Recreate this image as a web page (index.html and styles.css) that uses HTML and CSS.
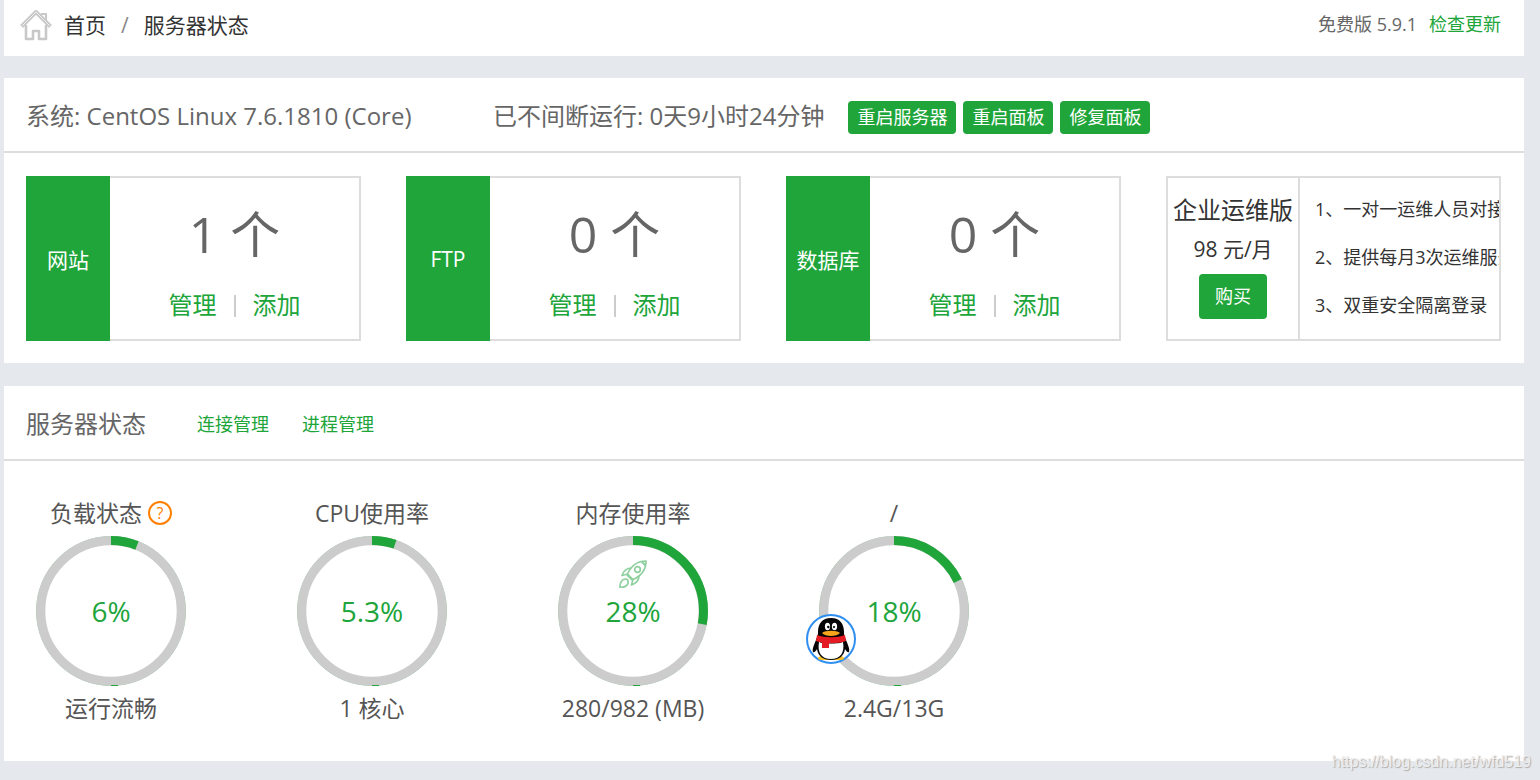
FILE: index.html
```html
<!DOCTYPE html>
<html lang="zh-CN">
<head>
<meta charset="utf-8">
<title>服务器状态</title>
<link rel="stylesheet" href="styles.css">
</head>
<body>
<header class="panel topbar">
  <nav class="crumbs">
    <svg class="home" viewBox="0 0 32 32" fill="none" stroke="#c8c8c8" stroke-width="2.6" stroke-linejoin="round" aria-hidden="true">
      <path d="M6 16V30h7v-8h6v8h7V16"/>
      <path d="M1.500 17.500L16 3l14.500 14.500" stroke-width="4"/>
      <path d="M1.500 17.500L16 3l14.500 14.500" stroke="#eee" stroke-width="1"/>
      <path d="M21 5h5v7" stroke-width="2"/>
    </svg>
    <a class="crumb" href="#">首页</a>
    <span class="slash">/</span>
    <span class="crumb">服务器状态</span>
  </nav>
  <div class="version"><span>免费版 5.9.1</span><a class="link" href="#">检查更新</a></div>
</header>

<section class="panel">
  <div class="panel-head">
    <span class="system">系统: CentOS Linux 7.6.1810 (Core)</span>
    <span class="uptime">已不间断运行: 0天9小时24分钟</span>
    <div class="actions">
      <button class="btn" type="button">重启服务器</button>
      <button class="btn" type="button">重启面板</button>
      <button class="btn" type="button">修复面板</button>
    </div>
  </div>
  <div class="cards">
    <article class="card">
      <h2 class="card-name">网站</h2>
      <div class="card-body">
        <div class="count">1 个</div>
        <div class="card-links"><a class="link" href="#">管理</a><span class="divider"></span><a class="link" href="#">添加</a></div>
      </div>
    </article>
    <article class="card">
      <h2 class="card-name">FTP</h2>
      <div class="card-body">
        <div class="count">0 个</div>
        <div class="card-links"><a class="link" href="#">管理</a><span class="divider"></span><a class="link" href="#">添加</a></div>
      </div>
    </article>
    <article class="card">
      <h2 class="card-name">数据库</h2>
      <div class="card-body">
        <div class="count">0 个</div>
        <div class="card-links"><a class="link" href="#">管理</a><span class="divider"></span><a class="link" href="#">添加</a></div>
      </div>
    </article>
    <article class="card offer">
      <div class="plan">
        <h2 class="plan-name">企业运维版</h2>
        <div class="price">98 元/月</div>
        <button class="btn buy" type="button">购买</button>
      </div>
      <ul class="features">
        <li>1、一对一运维人员对接</li>
        <li>2、提供每月3次运维服务</li>
        <li>3、双重安全隔离登录</li>
      </ul>
    </article>
  </div>
</section>

<section class="panel status">
  <div class="panel-head">
    <h2 class="status-title">服务器状态</h2>
    <nav class="status-links"><a class="link" href="#">连接管理</a><a class="link" href="#">进程管理</a></nav>
  </div>
  <div class="gauges">
    <div class="gauge">
      <div class="label">负载状态<button class="help" type="button" aria-label="帮助">?</button></div>
      <div class="dial">
        <svg class="ring" viewBox="0 0 150 150"><circle class="edge" cx="75" cy="75" r="74.500"/><circle class="track" cx="75" cy="75" r="70.200"/><circle class="arc" cx="75" cy="75" r="70.500" pathLength="100" stroke-dasharray="6 100"/><path class="notch" d="M75 149.500h7"/></svg>
        <span class="value">6%</span>
      </div>
      <div class="label">运行流畅</div>
    </div>
    <div class="gauge">
      <div class="label">CPU使用率</div>
      <div class="dial">
        <svg class="ring" viewBox="0 0 150 150"><circle class="edge" cx="75" cy="75" r="74.500"/><circle class="track" cx="75" cy="75" r="70.200"/><circle class="arc" cx="75" cy="75" r="70.500" pathLength="100" stroke-dasharray="5.300 100"/><path class="notch" d="M75 149.500h7"/></svg>
        <span class="value">5.3%</span>
      </div>
      <div class="label">1 核心</div>
    </div>
    <div class="gauge">
      <div class="label">内存使用率</div>
      <div class="dial">
        <svg class="ring" viewBox="0 0 150 150"><circle class="edge" cx="75" cy="75" r="74.500"/><circle class="track" cx="75" cy="75" r="70.200"/><circle class="arc" cx="75" cy="75" r="70.500" pathLength="100" stroke-dasharray="28 100"/><path class="notch" d="M75 149.500h7"/></svg>
        <svg class="rocket" viewBox="0 0 28 28" fill="none" stroke="#8fd09f" stroke-width="1.700" stroke-linejoin="round" aria-hidden="true">
          <path d="M27 1C19 1 12.500 5 8.500 14l5.500 5.500C23 15.500 27 9 27 1z"/>
          <circle cx="18.500" cy="9.500" r="2.800"/>
          <path d="M12.500 8C7.500 8 5 10 3 15.500l5.500-1.500M20 15.500c0 5-2 7.500-7.500 9.500l1.500-5.500M7 14l7 7"/>
          <path d="M8.500 19.500C4 18 1 21 1 27.500c6.500 0 9.500-3.500 7.500-8z"/>
          <path d="M22.500 1.500l4 4" stroke-width="2"/>
        </svg>
        <span class="value">28%</span>
      </div>
      <div class="label">280/982 (MB)</div>
    </div>
    <div class="gauge">
      <div class="label">/</div>
      <div class="dial">
        <svg class="ring" viewBox="0 0 150 150"><circle class="edge" cx="75" cy="75" r="74.500"/><circle class="track" cx="75" cy="75" r="70.200"/><circle class="arc" cx="75" cy="75" r="70.500" pathLength="100" stroke-dasharray="18 100"/><path class="notch" d="M75 149.500h7"/></svg>
        <span class="value">18%</span>
        <svg class="penguin" viewBox="0 0 50 50" role="img" aria-label="QQ">
          <circle cx="25" cy="25" r="24" fill="#fff" stroke="#2f8ff0" stroke-width="2"/>
          <path d="M15 42c-4 1-4 4 0 4h9v-3zM35 42c4 1 4 4 0 4h-9v-3z" fill="#f5c02b"/>
          <path d="M25 4c-9 0-13 6-13 14 0 4-1 5-2 8-2 5-4 9-3 12 1 1 3-1 4-3 1 7 6 11 14 11s13-4 14-11c1 2 3 4 4 3 1-3-1-7-3-12-1-3-2-4-2-8 0-8-4-14-13-14z" fill="#050505"/>
          <path d="M13 28c4 2 20 2 24 0 2 11-3 17-12 17s-14-6-12-17z" fill="#fff"/>
          <path d="M11 21c8 3 20 3 28 0l1 6c-8 3-22 3-30 0z" fill="#e51b23"/>
          <path d="M16 26h7v8h-7z" fill="#e51b23"/>
          <ellipse cx="21.500" cy="12.500" rx="2.600" ry="3.700" fill="#fff"/>
          <ellipse cx="28.500" cy="12.500" rx="2.600" ry="3.700" fill="#fff"/>
          <circle cx="22.300" cy="13" r="1.200" fill="#000"/>
          <circle cx="28" cy="13" r="1.100" fill="#000"/>
          <path d="M16 19c3-3 15-3 18 0-3 4-15 4-18 0z" fill="#f7a51c"/>
        </svg>
      </div>
      <div class="label">2.4G/13G</div>
    </div>
  </div>
</section>
<div class="watermark">https://blog.csdn.net/wfd519</div>
</body>
</html>
```
FILE: styles.css
```css
* { box-sizing: border-box; }

body {
  position: relative;
  min-height: 100vh;
  margin: 0;
  padding: 0 16px 19px 4px;
  background: #e5e9ee;
  color: #666;
  font-family: "Open Sans", "Noto Sans CJK SC", sans-serif;
  font-size: 18px;
  font-weight: 400;
}

h2, ul { margin: 0; padding: 0; font-weight: inherit; list-style: none; }
a { color: inherit; text-decoration: none; }
.link { color: #20a53a; }

.panel { margin-bottom: 22px; background: #fff; }

.topbar {
  display: flex;
  justify-content: space-between;
  align-items: center;
  height: 56px;
  padding: 0 23px 6px 16px;
}
.crumbs { display: flex; align-items: center; font-size: 21px; line-height: 32px; }
.home { width: 32px; height: 32px; margin-right: 12px; }
.crumb { color: #333; }
.slash { margin: 0 15px; color: #888; }
.version { display: flex; gap: 12px; padding-bottom: 2px; line-height: 24px; }

.panel-head {
  display: flex;
  align-items: center;
  height: 75px;
  padding: 0 22px;
  border-bottom: 2px solid #ddd;
  font-size: 24px;
}
.system { width: 467px; }
.uptime { margin-right: 24px; }
.actions { display: flex; gap: 7px; padding-top: 6px; }

.btn {
  height: 33px;
  padding: 0 9px;
  border: 0;
  border-radius: 4px;
  background: #20a53a;
  color: #fff;
  font: inherit;
  font-size: 18px;
  line-height: 33px;
}

.cards {
  display: grid;
  grid-template-columns: repeat(4, minmax(0, 1fr));
  gap: 45px;
  padding: 23px 23px 22px 22px;
}
.card { display: flex; height: 165px; border: 2px solid #ddd; }
.card-name {
  display: flex;
  align-items: center;
  justify-content: center;
  width: 84px;
  margin: -2px 0 -2px -2px;
  background: #20a53a;
  color: #fff;
  font-size: 21px;
}
.card-body { flex: 1; padding-top: 20px; text-align: center; }
.count { font-size: 50px; line-height: 72px; }
.card-links {
  display: flex;
  justify-content: center;
  align-items: center;
  gap: 17px;
  padding-top: 19px;
  font-size: 24px;
  line-height: 32px;
}
.divider { width: 2px; height: 22px; margin-top: 2px; background: #ccc; }

.offer { overflow: hidden; color: #333; }
.plan {
  flex: none;
  width: 132px;
  padding-top: 14px;
  border-right: 2px solid #ddd;
  text-align: center;
}
.plan-name { font-size: 24px; line-height: 36px; }
.price { font-size: 21px; line-height: 42px; }
.buy { height: 45px; padding: 0 16px; margin-top: 4px; }
.features { padding: 7px 0 0 15px; line-height: 48px; white-space: nowrap; }

.status { margin: 23px 0 0; }
.status-title { margin-right: 51px; font-size: 24px; }
.status-links { display: flex; gap: 33px; font-size: 18px; }
.gauges { display: flex; gap: 111px; padding: 33px 32px 30px; }
.gauge { width: 150px; color: #555; }
.label {
  display: flex;
  justify-content: center;
  align-items: center;
  height: 42px;
  padding-bottom: 4px;
  font-size: 23px;
  line-height: 34px;
  white-space: nowrap;
}
.dial + .label { height: 45px; padding-bottom: 1px; }
.help {
  width: 24px;
  height: 24px;
  margin-left: 6px;
  padding: 0;
  border: 2px solid #ff7f00;
  border-radius: 50%;
  background: none;
  color: #ff7f00;
  font: inherit;
  font-size: 16px;
  line-height: 20px;
}
.dial { position: relative; display: grid; place-items: center; height: 150px; }
.ring { grid-area: 1 / 1; width: 150px; height: 150px; }
.ring circle { fill: none; }
.edge { stroke: #9fcca8; stroke-width: 1; }
.track { stroke: #ccc; stroke-width: 9; }
.notch { stroke: #20a53a; stroke-width: 1; }
.arc {
  stroke: #20a53a;
  stroke-width: 9;
  transform: rotate(-90deg);
  transform-origin: center;
}
.value { grid-area: 1 / 1; color: #20a53a; font-size: 28px; }
.rocket { position: absolute; top: 24px; left: 61px; width: 28px; height: 28px; }
.penguin { position: absolute; top: 78px; left: -13px; width: 50px; height: 50px; }

.watermark {
  position: absolute;
  right: 9px;
  bottom: 8px;
  color: #eee;
  font-family: "Liberation Sans", sans-serif;
  font-size: 16px;
  line-height: 20px;
  text-shadow: 1px 1px 1px #aaa;
}
```
